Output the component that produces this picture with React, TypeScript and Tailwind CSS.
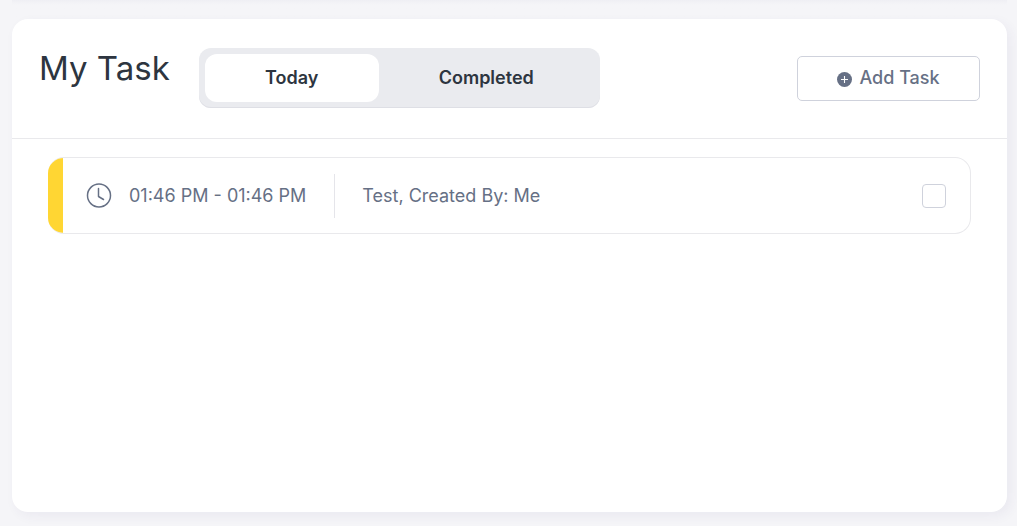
import React, { useState } from "react";

const tabs = ["Today", "Completed"];

export default function App() {
  const [active, setActive] = useState("Today");
  const [done, setDone] = useState(false);
  return (
    <main className="min-h-screen bg-[#f5f5f8] font-['Inter',sans-serif] text-[#667085]">
      <div className="mr-2.5 ml-3 h-[19px] bg-linear-to-b from-[#efeff4] to-[#f5f5f8] to-25%" />
      <section className="mr-2.5 ml-3 min-h-[493px] rounded-2xl bg-white shadow-[4px_4px_12px_rgba(60,50,120,0.06)]">
        <header className="flex items-center border-b border-[#e9e9ec] px-[27px] pt-[29px] pb-[30px]">
          <h1 className="mb-5 text-[33px] leading-10 text-[#2d3540]">My Task</h1>
          <div role="tablist" className="ml-[29px] flex h-[60px] w-[401px] rounded-xl bg-[#eaebef] p-1.5 shadow-[inset_0_-1px_0_#dedfe5]">
            {tabs.map((t) => (
              <button
                key={t}
                role="tab"
                aria-selected={t === active}
                onClick={() => setActive(t)}
                className={
                  "h-12 rounded-xl text-lg font-semibold text-[#2d3540] " +
                  (t === "Today" ? "w-[174px] " : "flex-1 ") +
                  (t === active ? "bg-white" : "")
                }
              >
                {t}
              </button>
            ))}
          </div>
          <button className="ml-auto flex h-[45px] w-[183px] items-center justify-center gap-1.5 rounded-[5px] border border-[#cfd2dc] text-lg font-medium">
            <svg viewBox="0 0 16 16" className="mt-0.5 size-4" aria-hidden="true">
              <circle cx="7.5" cy="8.5" r="7.5" fill="currentColor" />
              <path d="M7.5 5v7M4 8.5h7" stroke="white" strokeWidth="1.1" />
            </svg>
            Add Task
          </button>
        </header>
        <ul className="px-9 pt-[18px]">
          <li className="flex h-[77px] items-center overflow-hidden rounded-2xl border border-l-0 border-[#e9e9ec] pr-6 text-lg">
            <span className="h-full w-[15px] bg-[#ffd633]" />
            <svg viewBox="0 0 26 26" fill="none" stroke="currentColor" strokeWidth="1.5" strokeLinecap="round" strokeLinejoin="round" className="ml-[23px] size-[26px]" aria-hidden="true">
              <circle cx="13" cy="12.5" r="11.5" />
              <path d="M12.5 5.5v8l5 3" />
            </svg>
            <time className="ml-[17px]">01:46 PM - 01:46 PM</time>
            <label htmlFor="task" className="ml-7 flex h-11 items-center border-l border-[#e5e5ea] pl-[27px]">Test, Created By: Me</label>
            <input id="task" type="checkbox" checked={done} onChange={() => setDone(!done)} className="ml-auto size-6 appearance-none rounded border border-[#cfd2dc] checked:bg-[#ffd633]" />
          </li>
        </ul>
      </section>
    </main>
  );
}
